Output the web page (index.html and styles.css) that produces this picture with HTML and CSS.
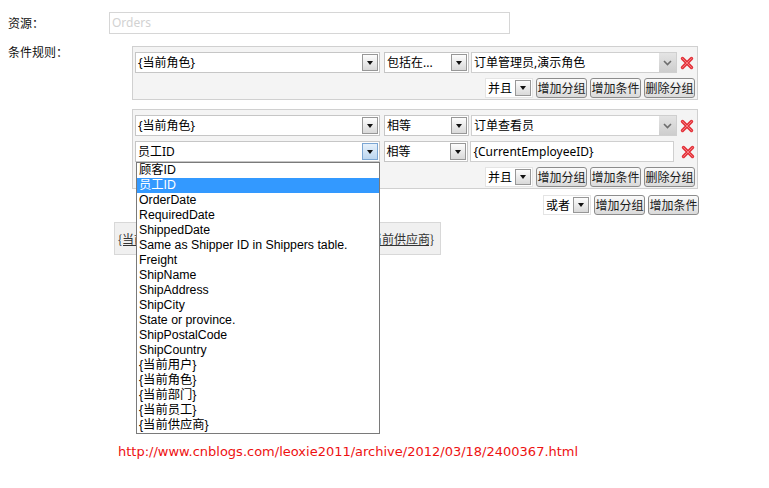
FILE: index.html
```html
<!DOCTYPE html>
<html lang="zh-CN">
<head>
<meta charset="utf-8">
<title>条件规则</title>
<link rel="stylesheet" href="styles.css">
</head>
<body>
<div class="page">
  <div class="form">
    <div class="label l1">资源：</div>
    <div class="field"><div class="textbox readonly">Orders</div></div>
    <div class="label l2">条件规则：</div>
    <div class="rules">
      <div class="group">
        <div class="cond">
          <div class="sel w1"><span class="val">{当前角色}</span><span class="arrow"><i></i></span></div>
          <div class="sel w2"><span class="val">包括在...</span><span class="arrow"><i></i></span></div>
          <div class="combo"><span class="val">订单管理员,演示角色</span><span class="carrow"><svg width="9" height="6" viewBox="0 0 9 6"><polyline points="1,1 4.5,4.5 8,1" fill="none" stroke="#6d6d6d" stroke-width="1.6"/></svg></span></div>
          <svg class="del" width="14" height="14" viewBox="0 0 14 14"><path d="M2.5 2.5 L11.5 11.5 M11.5 2.5 L2.5 11.5" stroke="#e3323a" stroke-width="3.4" stroke-linecap="round"/><path d="M2.5 2.5 L11.5 11.5 M11.5 2.5 L2.5 11.5" stroke="#f47a7e" stroke-width="1" stroke-linecap="round"/></svg>
        </div>
        <div class="acts">
          <div class="sel small"><span class="val">并且</span><span class="arrow"><i></i></span></div>
          <button class="btn">增加分组</button>
          <button class="btn">增加条件</button>
          <button class="btn">删除分组</button>
        </div>
      </div>
      <div class="group g2">
        <div class="cond">
          <div class="sel w1"><span class="val">{当前角色}</span><span class="arrow"><i></i></span></div>
          <div class="sel w2"><span class="val">相等</span><span class="arrow"><i></i></span></div>
          <div class="combo"><span class="val">订单查看员</span><span class="carrow"><svg width="9" height="6" viewBox="0 0 9 6"><polyline points="1,1 4.5,4.5 8,1" fill="none" stroke="#6d6d6d" stroke-width="1.6"/></svg></span></div>
          <svg class="del" width="14" height="14" viewBox="0 0 14 14"><path d="M2.5 2.5 L11.5 11.5 M11.5 2.5 L2.5 11.5" stroke="#e3323a" stroke-width="3.4" stroke-linecap="round"/><path d="M2.5 2.5 L11.5 11.5 M11.5 2.5 L2.5 11.5" stroke="#f47a7e" stroke-width="1" stroke-linecap="round"/></svg>
        </div>
        <div class="cond">
          <div class="sel w1 open"><span class="val">员工ID</span><span class="arrow focus"><i></i></span>
            <ul class="list">
              <li>顾客ID</li>
              <li class="on">员工ID</li>
              <li>OrderDate</li>
              <li>RequiredDate</li>
              <li>ShippedDate</li>
              <li>Same as Shipper ID in Shippers table.</li>
              <li>Freight</li>
              <li>ShipName</li>
              <li>ShipAddress</li>
              <li>ShipCity</li>
              <li>State or province.</li>
              <li>ShipPostalCode</li>
              <li>ShipCountry</li>
              <li>{当前用户}</li>
              <li>{当前角色}</li>
              <li>{当前部门}</li>
              <li>{当前员工}</li>
              <li>{当前供应商}</li>
            </ul>
          </div>
          <div class="sel w2"><span class="val">相等</span><span class="arrow"><i></i></span></div>
          <div class="combo plain"><span class="val">{CurrentEmployeeID}</span></div>
          <svg class="del d2" width="14" height="14" viewBox="0 0 14 14"><path d="M2.5 2.5 L11.5 11.5 M11.5 2.5 L2.5 11.5" stroke="#e3323a" stroke-width="3.4" stroke-linecap="round"/><path d="M2.5 2.5 L11.5 11.5 M11.5 2.5 L2.5 11.5" stroke="#f47a7e" stroke-width="1" stroke-linecap="round"/></svg>
        </div>
        <div class="acts">
          <div class="sel small"><span class="val">并且</span><span class="arrow"><i></i></span></div>
          <button class="btn">增加分组</button>
          <button class="btn">增加条件</button>
          <button class="btn">删除分组</button>
        </div>
      </div>
      <div class="acts root">
        <div class="sel small"><span class="val">或者</span><span class="arrow"><i></i></span></div>
        <button class="btn">增加分组</button>
        <button class="btn">增加条件</button>
      </div>
      <div class="tokens">
        <span>{当前用户}</span><span>{当前供应商}</span>
      </div>
    </div>
  </div>
  <div class="url">http://www.cnblogs.com/leoxie2011/archive/2012/03/18/2400367.html</div>
</div>
</body>
</html>
```

FILE: styles.css
```css
html, body {
  margin: 0;
  padding: 0;
  background: #ffffff;
}

.page {
  padding: 12px 0 0 8px;
  font-family: "Noto Sans", "Noto Sans CJK SC", sans-serif;
  font-size: 12px;
  color: #000;
}

.form {
  display: grid;
  grid-template-columns: 101px 592px;
  row-gap: 12px;
}

.label {
  font-family: "Noto Sans CJK JP", "Noto Sans CJK SC", sans-serif;
  font-size: 12px;
  color: #111;
}

.l1 { line-height: 21px; }
.l2 { line-height: 12px; }

.textbox {
  box-sizing: border-box;
  width: 401px;
  height: 22px;
  border: 1px solid #d6d6d6;
  padding-left: 2px;
  line-height: 20px;
}

.readonly { color: #d2d2d2; }

.rules {
  display: flex;
  flex-direction: column;
}

.group {
  box-sizing: border-box;
  width: 566px;
  margin-left: 23px;
  border: 1px solid #d0d0d0;
  background: #f4f4f4;
  padding: 5px 2px 1px 2px;
  display: flex;
  flex-direction: column;
  gap: 5px;
}

.g2 { margin-top: 9px; }

.cond {
  display: flex;
  align-items: center;
  height: 21px;
}

.sel {
  box-sizing: border-box;
  height: 21px;
  display: flex;
  align-items: center;
  background: #fff;
  border: 1px solid #c6c6c6;
  position: relative;
}

.sel .val {
  flex: 1;
  padding-left: 2px;
  line-height: 19px;
  white-space: nowrap;
  overflow: hidden;
}

.arrow {
  box-sizing: border-box;
  width: 16px;
  height: 17px;
  margin-right: 1px;
  border: 1px solid #979797;
  background: linear-gradient(#fdfdfd, #d9d9d9);
  display: flex;
  align-items: center;
  justify-content: center;
}

.arrow i {
  width: 0;
  height: 0;
  border-left: 3.5px solid transparent;
  border-right: 3.5px solid transparent;
  border-top: 4px solid #111;
}

.arrow.focus {
  border-color: #7ba6d3;
  background: linear-gradient(#e6f1fb, #bcd6ef);
}

.w1 { width: 245px; margin-right: 4px; }
.w2 { width: 85px; margin-right: 2px; }

.combo {
  box-sizing: border-box;
  width: 206px;
  height: 21px;
  border: 1px solid #cfcfcf;
  background: #fff;
  display: flex;
  align-items: stretch;
}

.combo .val {
  flex: 1;
  padding-left: 2px;
  line-height: 19px;
  white-space: nowrap;
}

.combo.plain { width: 204px; }

.carrow {
  width: 17px;
  background: linear-gradient(#e4e4e4, #cdcdcd);
  display: flex;
  align-items: center;
  justify-content: center;
}

.del {
  margin-left: 3px;
  flex: none;
}

.del.d2 { margin-left: 7px; }

.acts {
  display: flex;
  justify-content: flex-end;
  align-items: center;
  gap: 3px;
  height: 20px;
}

.acts.root {
  margin-top: 6px;
  padding-right: 2px;
}

.sel.small {
  width: 48px;
  height: 20px;
  border-color: #e4e4e4;
}

.sel.small .val {
  line-height: 18px;
  font-family: "Noto Sans CJK SC", sans-serif;
}

.sel.small .arrow {
  height: 16px;
}

.btn {
  box-sizing: border-box;
  width: 51px;
  height: 20px;
  padding: 0;
  border: 1px solid #8c8c8c;
  border-radius: 3px;
  background: linear-gradient(#fbfbfb, #dadada);
  font-family: "Noto Sans CJK SC", sans-serif;
  font-size: 12px;
  line-height: 18px;
  color: #1a1a1a;
}

.list {
  position: absolute;
  top: 20px;
  left: 0;
  z-index: 5;
  box-sizing: border-box;
  width: 244px;
  margin: 0;
  padding: 0;
  list-style: none;
  background: #fff;
  border: 1px solid #7a7a7a;
  font-family: "Liberation Sans", "Noto Sans CJK SC", sans-serif;
  font-size: 12.3px;
  color: #000;
}

.list li {
  height: 15px;
  line-height: 15px;
  padding-left: 2px;
  white-space: nowrap;
}

.list li.on {
  background: #3399ff;
  color: #fff;
}

.tokens {
  box-sizing: border-box;
  width: 327px;
  height: 33px;
  margin: 7px 0 0 5px;
  padding: 0 6px 0 3px;
  border: 1px solid #d8d8d8;
  background: #f0f0f0;
  display: flex;
  justify-content: space-between;
  align-items: center;
  font-family: "Noto Sans CJK SC", sans-serif;
  color: #333;
}

.tokens span { text-decoration: underline; }

.url {
  margin: 189px 0 0 110px;
  font-family: "DejaVu Sans", sans-serif;
  font-size: 13px;
  line-height: 16px;
  color: #ee1111;
}
```
